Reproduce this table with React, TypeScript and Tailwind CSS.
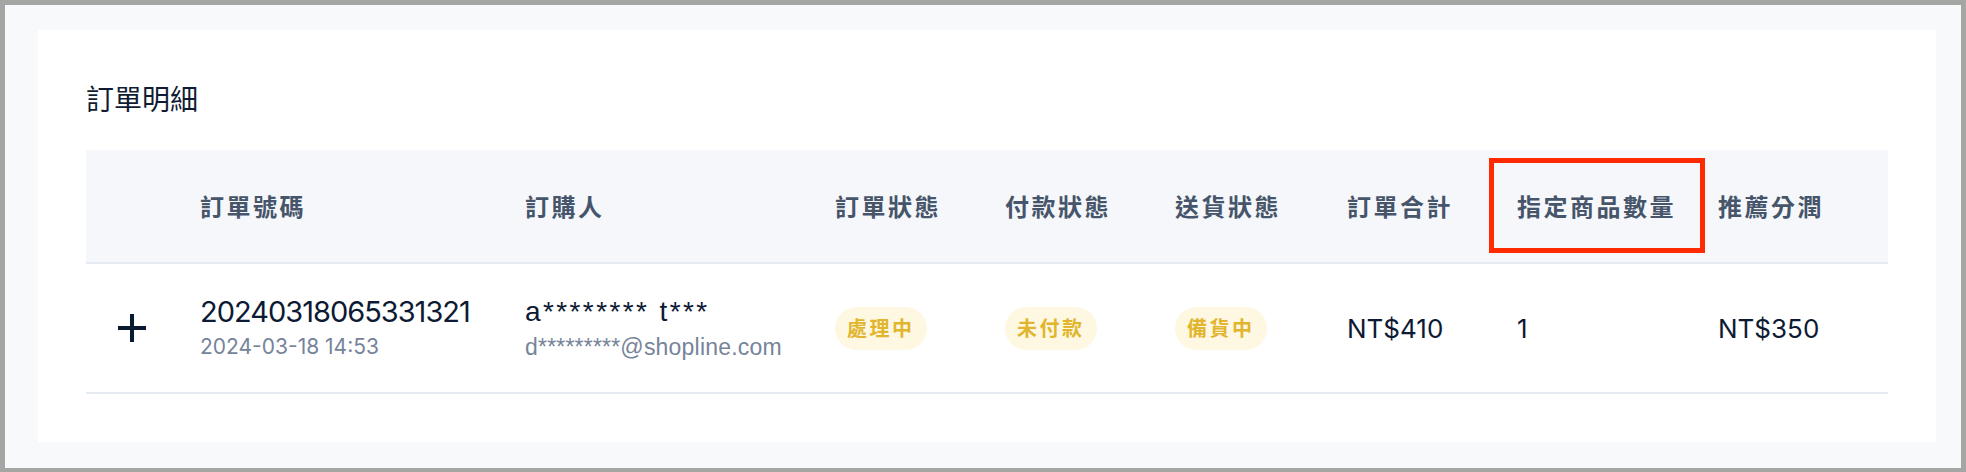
import React from 'react';

const cjk = "font-['Noto_Sans_CJK_TC','Noto_Sans',sans-serif]";
const num = "font-['Inter','Noto_Sans_CJK_TC',sans-serif]";
const latin = "font-['Liberation_Sans','Noto_Sans_CJK_TC',sans-serif]";

const cols =
    'grid grid-cols-[114px_325px_310px_170px_170px_172px_170px_201px_170px]';

const headers = ['', '訂單號碼', '訂購人', '訂單狀態', '付款狀態', '送貨狀態', '訂單合計', '指定商品數量', '推薦分潤'];

const Badge: React.FC<{ label: string }> = ({ label }) => (
    <span
        className={`${cjk} inline-flex items-center h-[43px] pl-[12px] pr-[12px] rounded-full bg-[#fef8e2] text-[#e2b52e] text-[20px] font-bold tracking-[2.5px] leading-none`}
    >
        {label}
    </span>
);

const PlusIcon = () => (
    <svg width="28" height="28" viewBox="0 0 28 28" className="text-[#0b1a33]">
        <rect x="0" y="12" width="28" height="4" fill="currentColor" />
        <rect x="12" y="0" width="4" height="28" fill="currentColor" />
    </svg>
);

export default function App() {
    return (
        <div className="h-[472px] w-[1966px] border-[#a4a6a4] border-t-[5px] border-l-[5px] border-r-[5px] border-b-[4px] bg-[#f8f9fb] pt-[25px] pl-[33px] pr-[25px] pb-[26px]">
            <div className="h-full bg-white px-[48px] pt-[48px]">
                <h2 className={`${cjk} text-[28px] leading-[40px] text-[#101c33] mb-[32px]`}>訂單明細</h2>

                <div className={`${cols} h-[114px] bg-[#f5f7fb] border-b-2 border-[#e6ebf3]`}>
                    {headers.map((h, i) => (
                        <div
                            key={i}
                            className={`${cjk} relative flex items-center h-[112px] text-[24px] font-bold tracking-[2.5px] text-[#46556a]`}
                        >
                            {h}
                            {i === 7 && (
                                <div className="absolute left-[-28px] top-[8px] w-[216px] h-[95px] border-[5px] border-[#ff2a00]" />
                            )}
                        </div>
                    ))}
                </div>

                <div className={`${cols} h-[130px] border-b-2 border-[#e6ebf3] items-center`}>
                    <div className="pl-[32px] flex items-center">
                        <PlusIcon />
                    </div>
                    <div className="flex flex-col">
                        <span className={`${num} text-[29px] leading-[36px] tracking-[-1px] text-[#0d1a33]`}>
                            20240318065331321
                        </span>
                        <span className={`${num} text-[21px] leading-[30px] mt-[2px] text-[#76849a]`}>
                            2024-03-18 14:53
                        </span>
                    </div>
                    <div className="flex flex-col">
                        <span className={`${latin} text-[28px] leading-[36px] tracking-[2.4px] text-[#0d1a33]`}>
                            a******** t***
                        </span>
                        <span className={`${latin} text-[23px] leading-[30px] mt-[2px] tracking-[0.2px] text-[#76849a]`}>
                            d*********@shopline.com
                        </span>
                    </div>
                    <div>
                        <Badge label="處理中" />
                    </div>
                    <div>
                        <Badge label="未付款" />
                    </div>
                    <div>
                        <Badge label="備貨中" />
                    </div>
                    <div className={`${num} text-[26px] text-[#0d1a33]`}>NT$410</div>
                    <div className={`${num} text-[26px] text-[#0d1a33]`}>1</div>
                    <div className={`${num} text-[26px] text-[#0d1a33]`}>NT$350</div>
                </div>
            </div>
        </div>
    );
}
